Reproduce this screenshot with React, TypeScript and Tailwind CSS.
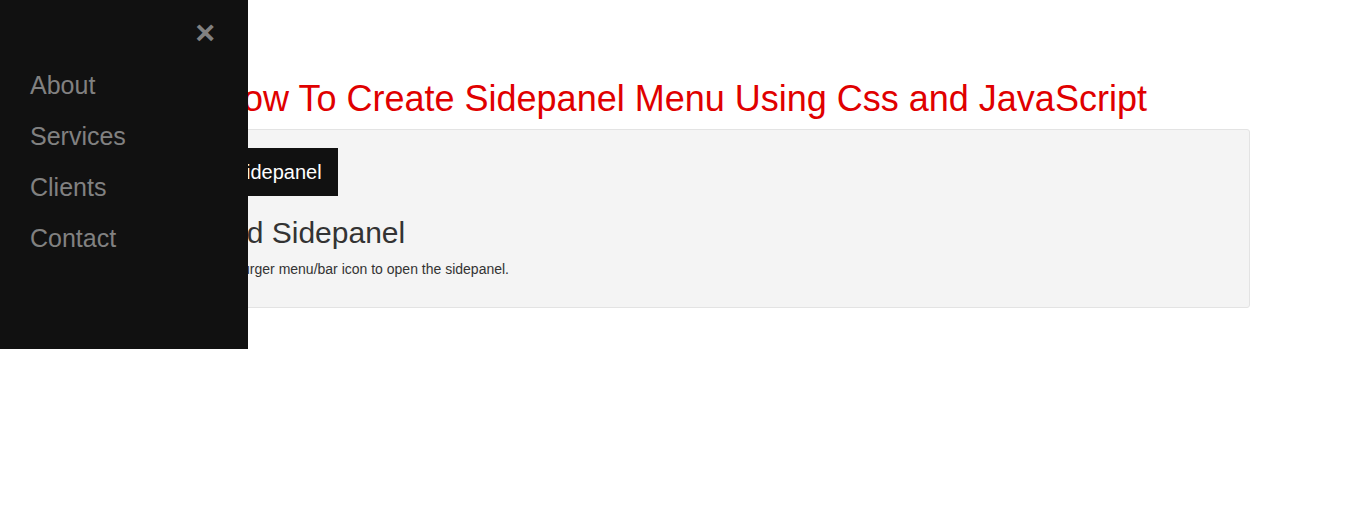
const links = ["About", "Services", "Clients", "Contact"];

function Sidepanel() {
  return (
    <div className="fixed top-0 left-0 z-10 h-[349px] w-[248px] overflow-hidden bg-[#111] pt-[60px]">
      <a className="absolute top-[12px] right-[25px] cursor-pointer px-[8px] text-[34px] font-bold leading-[40px] text-[#818181]">
        ×
      </a>
      {links.map((l) => (
        <a
          key={l}
          className="block cursor-pointer py-[8px] pr-[8px] pl-[30px] text-[25px] leading-[35px] text-[#818181] hover:text-[#f1f1f1]"
        >
          {l}
        </a>
      ))}
    </div>
  );
}

export default function App() {
  return (
    <div className="min-h-[527px] bg-white font-['Liberation_Sans',Arial,sans-serif] text-[#333]">
      <Sidepanel />
      <h1 className="pt-[79px] text-center text-[36px] leading-[40px] text-[#e00000]">
        How To Create Sidepanel Menu Using Css and JavaScript
      </h1>
      <div className="mx-auto mt-[10px] w-[1136px] rounded-[3px] border border-[#e3e3e3] bg-[#f4f4f4] px-[15px] pt-[18px] pb-[28px]">
        <button className="bg-[#111] py-[10px] pr-[16px] pl-[15px] text-[20px] leading-[28px] text-white">
          <span className="font-['DejaVu_Sans',sans-serif]">☰</span> Toggle Sidepanel
        </button>
        <h2 className="mt-[20px] text-[30px] leading-[33px]">Collapsed Sidepanel</h2>
        <p className="mt-[10px] text-[14px] leading-[20px]">
          Click on the hamburger menu/bar icon to open the sidepanel.
        </p>
      </div>
    </div>
  );
}
